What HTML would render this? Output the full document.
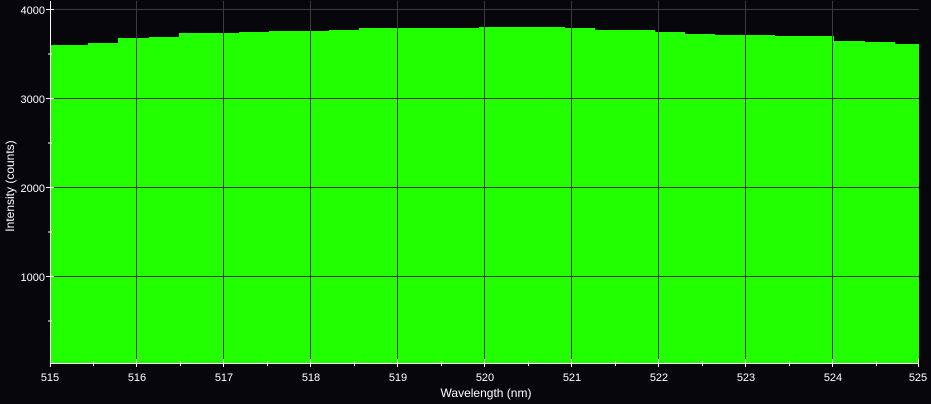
<!DOCTYPE html>
<html><head><style>
html,body{margin:0;padding:0;background:#07060b;width:931px;height:404px;overflow:hidden}
text{font-family:"Liberation Sans",sans-serif;font-size:11px;fill:#fff}
.t{font-size:12px}
</style></head><body>
<svg width="931" height="404" xmlns="http://www.w3.org/2000/svg">
<rect width="931" height="404" fill="#07060b"/>
<polygon fill="#22ff00" points="50,363 50,45 88,45 88,43 118,43 118,38 149,38 149,37 179,37 179,33 239,33 239,32 269,32 269,31 329,31 329,30 359,30 359,28 479,28 479,27 565,27 565,28 595,28 595,30 655,30 655,32 685,32 685,34 715,34 715,35 775,35 775,36 834,36 834,41 865,41 865,42 895,42 895,44 919,44 919,363"/>
<g stroke="#3a3a3e" stroke-width="1">
<line x1="50" y1="9.5" x2="919" y2="9.5"/>
<line x1="50" y1="98.5" x2="919" y2="98.5"/>
<line x1="50" y1="187.5" x2="919" y2="187.5"/>
<line x1="50" y1="276.5" x2="919" y2="276.5"/>
<line x1="136.5" y1="1" x2="136.5" y2="363"/>
<line x1="223.5" y1="1" x2="223.5" y2="363"/>
<line x1="310.5" y1="1" x2="310.5" y2="363"/>
<line x1="397.5" y1="1" x2="397.5" y2="363"/>
<line x1="484.5" y1="1" x2="484.5" y2="363"/>
<line x1="571.5" y1="1" x2="571.5" y2="363"/>
<line x1="658.5" y1="1" x2="658.5" y2="363"/>
<line x1="745.5" y1="1" x2="745.5" y2="363"/>
<line x1="832.5" y1="1" x2="832.5" y2="363"/>
</g>
<g stroke="#fff" stroke-width="1">
<line x1="50.5" y1="1" x2="50.5" y2="364"/>
<line x1="50" y1="363.5" x2="919" y2="363.5"/>
<line x1="46" y1="9.5" x2="54" y2="9.5"/><line x1="48" y1="54" x2="52" y2="54"/>
<line x1="46" y1="98.5" x2="54" y2="98.5"/><line x1="48" y1="143" x2="52" y2="143"/>
<line x1="46" y1="187.5" x2="54" y2="187.5"/><line x1="48" y1="232" x2="52" y2="232"/>
<line x1="46" y1="276.5" x2="54" y2="276.5"/><line x1="48" y1="321" x2="52" y2="321"/>
<line x1="50.5" y1="359" x2="50.5" y2="367"/>
<line x1="93.5" y1="361" x2="93.5" y2="366"/>
<line x1="136.5" y1="359" x2="136.5" y2="367"/><line x1="180.5" y1="361" x2="180.5" y2="366"/>
<line x1="223.5" y1="359" x2="223.5" y2="367"/><line x1="267.5" y1="361" x2="267.5" y2="366"/>
<line x1="310.5" y1="359" x2="310.5" y2="367"/><line x1="354.5" y1="361" x2="354.5" y2="366"/>
<line x1="397.5" y1="359" x2="397.5" y2="367"/><line x1="441.5" y1="361" x2="441.5" y2="366"/>
<line x1="484.5" y1="359" x2="484.5" y2="367"/><line x1="528.5" y1="361" x2="528.5" y2="366"/>
<line x1="571.5" y1="359" x2="571.5" y2="367"/><line x1="615.5" y1="361" x2="615.5" y2="366"/>
<line x1="658.5" y1="359" x2="658.5" y2="367"/><line x1="702.5" y1="361" x2="702.5" y2="366"/>
<line x1="745.5" y1="359" x2="745.5" y2="367"/><line x1="789.5" y1="361" x2="789.5" y2="366"/>
<line x1="832.5" y1="359" x2="832.5" y2="367"/><line x1="876.5" y1="361" x2="876.5" y2="366"/>
<line x1="918.5" y1="359" x2="918.5" y2="367"/>
</g>
<g text-anchor="end">
<text x="45" y="14">4000</text><text x="45" y="103">3000</text><text x="45" y="192">2000</text><text x="45" y="281">1000</text>
</g>
<g text-anchor="middle">
<text x="50" y="381">515</text><text x="137" y="381">516</text><text x="224" y="381">517</text><text x="311" y="381">518</text><text x="398" y="381">519</text><text x="485" y="381">520</text><text x="572" y="381">521</text><text x="659" y="381">522</text><text x="746" y="381">523</text><text x="833" y="381">524</text><text x="918" y="381">525</text>
<text class="t" x="486" y="397">Wavelength (nm)</text>
<text class="t" transform="translate(14,186) rotate(-90)">Intensity (counts)</text>
</g>
</svg>
</body></html>
